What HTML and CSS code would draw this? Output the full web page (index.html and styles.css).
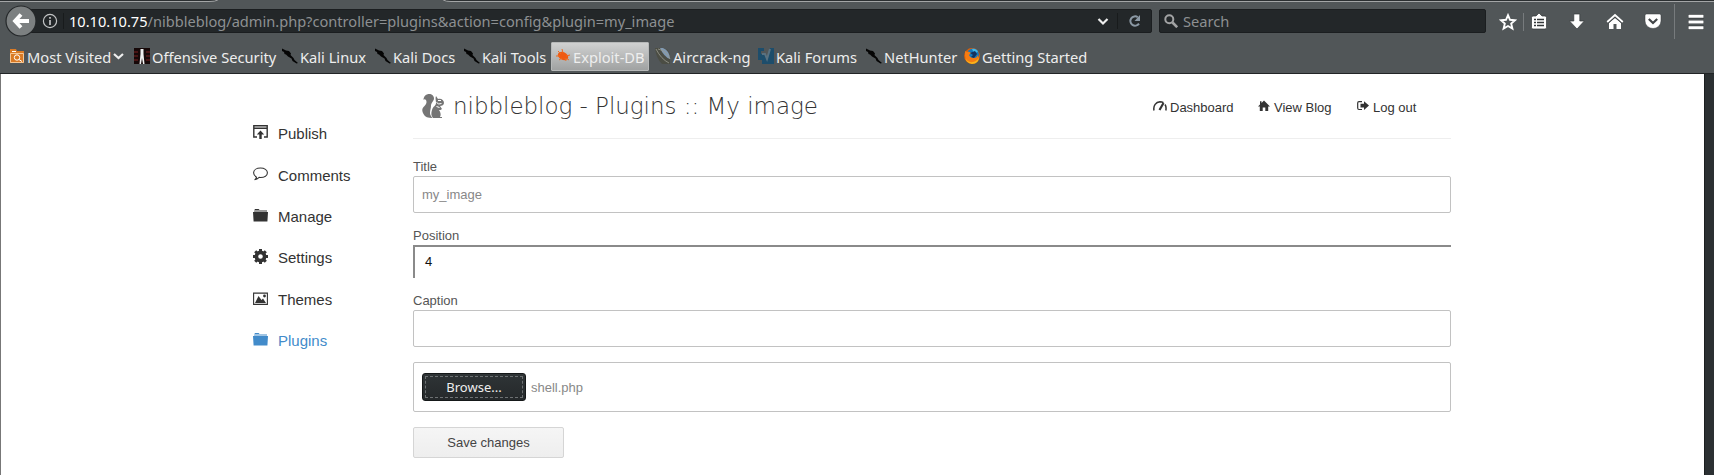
FILE: index.html
```html
<!DOCTYPE html>
<html lang="en">
<head>
<meta charset="utf-8">
<title>nibbleblog - Plugins :: My image</title>
<link rel="stylesheet" href="styles.css">
</head>
<body>
<svg class="defs" width="0" height="0">
  <symbol id="dragon" viewBox="0 0 16 16"><path d="M0 .5l4 2 3 .5 2 2.500-.5 1.500 3 3 1 2 3.500 3-1.500.5-4-2.500-1-2.500-3.500-2-2-2-1.500-.5-.5-2L0 3z" fill="#050505"/></symbol>
  <symbol id="folder" viewBox="0 0 15 13"><path d="M1.500 0h4l1 1H14v2H1z" opacity=".5"/><path d="M2 0h3.500l1 1H2z"/><path d="M0 3h15l-.6 9.500H.6z"/></symbol>
</svg>
<header class="chrome">
  <svg class="tabs" width="1714" height="3"><path d="M0 .5H218M443 .5H1714" stroke="#2b2f31"/><path d="M0 1.500H209q6 0 9-1.500M443 0q3 1.500 8 1.500H1714" stroke="#a3a5a6" fill="none"/></svg>
  <div class="toolbar">
    <div class="url">
      <svg class="back" width="32" height="32" viewBox="0 0 32 32"><circle cx="16" cy="16" r="15" fill="#7c8081" stroke="#25282a" stroke-width="1.200"/><path d="M16 9.500L10 16l6 6.500M10.500 16H24" stroke="#fff" stroke-width="3.800" fill="none"/></svg>
      <svg class="info" width="16" height="16" viewBox="0 0 16 16" fill="none" stroke="#c3c5c6" stroke-width="1.200"><circle cx="8" cy="8" r="6.600"/><path d="M8 7v5M8 4v1.700" stroke-width="1.700"/></svg>
      <span class="sep"></span>
      <span class="address"><b>10.10.10.75</b>/nibbleblog/admin.php?controller=plugins&amp;action=config&amp;plugin=my_image</span>
      <svg width="12" height="9" viewBox="0 0 12 9" fill="none" stroke="#eee" stroke-width="2.200"><path d="M1.500 2L6 6.500 10.500 2"/></svg>
      <span class="sep drop"></span>
      <svg width="14" height="14" viewBox="0 0 14 14"><path d="M11 9.600A4.700 4.700 0 1 1 9.800 3.200" fill="none" stroke="#8b98a4" stroke-width="2"/><path d="M12 1v6H6.500z" fill="#8b98a4"/></svg>
    </div>
    <div class="search">
      <svg width="14" height="14" viewBox="0 0 14 14" fill="none" stroke="#a2a3a4"><circle cx="5.300" cy="5.300" r="4" stroke-width="2"/><path d="M8.500 8.500l4.700 4.700" stroke-width="2.600"/></svg>
      <span>Search</span>
    </div>
    <div class="actions">
      <svg width="18" height="18" viewBox="0 0 18 18"><path d="M9 2.200l2 4.600 5 .5-3.800 3.300 1.200 5L9 13l-4.400 2.600 1.200-5L2 7.300l5-.5z" fill="none" stroke="#fff" stroke-width="1.900"/></svg>
      <i class="bar"></i>
      <svg width="18" height="18" viewBox="0 0 18 18"><path d="M1.500 4.500q0-1.500 1.500-1.500h3l3-3 3 3h3q1.500 0 1.500 1.500v10q0 1.500-1.500 1.500H3q-1.500 0-1.500-1.500z" fill="#fff" stroke="#34383a" stroke-width=".7"/><path d="M4 6.500h2M7 6.500h7M4 9.500h2M7 9.500h7M4 12.500h2M7 12.500h7" stroke="#34383a" stroke-width="1.500"/></svg>
      <svg width="18" height="18" viewBox="0 0 18 18"><path d="M5.800 1h6v7h4.500L9 16 1.500 8h4.300z" fill="#fff" stroke="#34383a" stroke-width=".7"/></svg>
      <svg width="18" height="18" viewBox="0 0 18 18"><path d="M9 5l6 5v6h-4.500v-5h-3v5H3v-6z" fill="#fff"/><path d="M1.200 9L9 2l7.800 7" fill="none" stroke="#fff" stroke-width="1.800"/><path d="M2.500 10L9 4.300l6.500 5.700" fill="none" stroke="#414547" stroke-width=".8"/></svg>
      <svg width="18" height="18" viewBox="0 0 18 18"><path d="M2.500 1h13q1.500 0 1.500 1.500V8A8 7.500 0 0 1 1 8V2.500Q1 1 2.500 1z" fill="#fff" stroke="#34383a" stroke-width=".5"/><path d="M4.800 6L9 10l4.200-4" stroke="#414547" stroke-width="2.200" fill="none"/></svg>
      <i class="bar tall"></i>
      <svg width="18" height="18" viewBox="0 0 18 18"><path d="M1 3.300h16M1 9h16M1 14.700h16" stroke="#34383a" stroke-width="4.200"/><path d="M1.500 3.300h15M1.500 9h15M1.500 14.700h15" stroke="#fff" stroke-width="3"/></svg>
    </div>
  </div>
  <nav class="bookmarks">
    <a><svg width="16" height="16" viewBox="0 0 16 16"><path d="M1 1h6l1 2h7v12H1z" fill="#d97a25"/><path d="M1.500 5.500h13v9h-13z" fill="none" stroke="#f6c795"/><circle cx="8" cy="9.500" r="2.700" fill="none" stroke="#fff"/><path d="M10 11.500l3 2M3 3.500h4" stroke="#fff"/></svg>Most Visited<svg class="chev" width="11" height="9" viewBox="0 0 11 9"><path d="M1 2l4.500 4L10 2" fill="none" stroke="#eee" stroke-width="2.200"/></svg></a>
    <a><svg width="16" height="16" viewBox="0 0 16 16"><path d="M0 0h16v16H0z" fill="#160808"/><path d="M0 4h4M0 8h4M0 12h4M12 4h4M12 8h4M12 12h4" stroke="#5a1818" stroke-width="1.500"/><path d="M6.500 1h3v5l1 10H9L8 10l-1 6H5.500l1-10z" fill="#eee"/></svg>Offensive Security</a>
    <a><svg width="16" height="16"><use href="#dragon"/></svg>Kali Linux</a>
    <a><svg width="16" height="16"><use href="#dragon"/></svg>Kali Docs</a>
    <a><svg width="16" height="16"><use href="#dragon"/></svg>Kali Tools</a>
    <a class="hover"><svg width="16" height="16" viewBox="0 0 16 16"><ellipse cx="8" cy="8" rx="5.500" ry="3.800" transform="rotate(25 8 8)" fill="#ef5a13"/><path d="M3 3l3 3M7 1l1 4M1 8h4M4 12l3-2M11 13l-1-3M14 12l-3-2M15 7l-4 1" stroke="#ef6a1c"/></svg>Exploit-DB</a>
    <a><svg width="16" height="16" viewBox="0 0 16 16"><path d="M0 0h8q7 2 7 8v8H7Q1 10 0 0z" fill="#4b4d44"/><path d="M5 0h3q7 3 7 11Q9 9 5 0z" fill="#8199b1"/><path d="M3 1q9 2 12 10M1 1q5 10 13 14" stroke="#9a9c90" stroke-width=".8" fill="none"/></svg>Aircrack-ng</a>
    <a><svg width="16" height="16" viewBox="0 0 16 16"><path d="M0 0h6v3H3v3h3l3 5 3-11h4v16H4v-4H0z" fill="#1d4d6b"/><path d="M4 6h3l2 5 3-10" fill="none" stroke="#5a7180" stroke-width="2"/></svg>Kali Forums</a>
    <a><svg width="16" height="16"><use href="#dragon"/></svg>NetHunter</a>
    <a><svg width="16" height="16" viewBox="0 0 16 16"><circle cx="8" cy="8" r="7.900" fill="#e66000"/><circle cx="9" cy="6.500" r="5.900" fill="#1679bd"/><path d="M8 1q4-1 6 3l-4 1z" fill="#43b8e8"/><path d="M1 3l2 1q2-1 4 1L5 7q1 3 5 3 3 0 4-3 1 7-6 8-8-1-7-12z" fill="#f57c13"/><path d="M1 9q2 6 8 5 5-1 6-6 0 8-7 8-6-1-7-7z" fill="#f8b51c"/><path d="M6 5l3 2-2 2 3 1 3-4-2-3z" fill="#15325f"/></svg>Getting Started</a>
  </nav>
</header>
<div class="view">
  <aside>
    <a><svg width="15" height="14" viewBox="0 0 15 14"><path d="M4 12H.8V.8h13.400V12H11M1 3.300h13" fill="none" stroke="currentColor" stroke-width="1.400"/><path d="M7.500 5.500L3.800 9.500h2.500V14h2.400V9.500h2.500z"/></svg>Publish</a>
    <a><svg width="15" height="14" viewBox="0 0 15 14"><path d="M3.500 10.200Q.6 8.500.6 5.800C.6 3 3.500 1 7.500 1s6.900 2 6.900 4.800-3 4.700-6.900 4.700l-1.300-.1Q4 12.500 1.600 12.800q1.700-1 1.900-2.600z" fill="none" stroke="currentColor" stroke-width="1.100"/></svg>Comments</a>
    <a><svg class="low" width="15" height="14"><use href="#folder" width="15" height="13"/></svg>Manage</a>
    <a><svg width="15" height="15" viewBox="0 0 15 15"><circle cx="7.500" cy="7.500" r="4.100" fill="none" stroke="currentColor" stroke-width="3.600"/><path d="M7.500 0v3M7.500 12v3M0 7.500h3M12 7.500h3M2.200 2.200l2 2M10.800 10.800l2 2M12.800 2.200l-2 2M2.200 12.800l2-2" stroke="currentColor" stroke-width="3"/></svg>Settings</a>
    <a><svg class="low" width="15" height="14" viewBox="0 0 15 14"><path d="M.6 1.100h13.800v11.300H.6z" fill="none" stroke="currentColor" stroke-width="1.100"/><path d="M2 11l3.500-7 3 4 1.500-1.500L13 11z"/><circle cx="11.500" cy="4" r="1.400"/></svg>Themes</a>
    <a class="current"><svg class="low" width="15" height="14"><use href="#folder" width="15" height="13"/></svg>Plugins</a>
  </aside>
  <main>
    <div class="head">
      <svg class="logo" width="23" height="25" viewBox="0 0 23 25" fill="#757575"><path d="M1.500 6C1.500 2 4.500 0 7 0c3 0 5 2 5 4.500S9 8.500 9 12c0 2-1 4-1 7 0 2 1 3 2.500 5C6 24 3 23 1.500 20-.5 17 0 14 2.500 12 4.500 10 5 8 4 6 3 5 2 5 1.500 6z"/><path d="M14 2l2 3c3-1 6 1 6 4 0 2-2 3-4 3l2 3c-1 1-2 1-3 1 2 3 2 5 1 7h2v1h-9c-2-2-2-5-1-8 1-4 4-4 4-7 0-2-1-5 0-7z"/><path d="M14.500 8.500q2 2.500 5 1M14.500 12.500l3 1M16 6.500h3" stroke="#fff" fill="none"/></svg>
      <h1>nibbleblog - Plugins :: My image</h1>
      <nav>
        <a><svg width="14" height="12" viewBox="0 0 14 12" fill="none" stroke="currentColor"><path d="M1 10.500C0 5.500 3 2 7 1.800c1.500 0 2.500.3 3.500.8M12 4.500q1.600 2.500.8 6" stroke-width="1.500"/><path d="M6.500 10L10.500 3" stroke-width="2.200"/></svg>Dashboard</a>
        <a><svg width="12" height="12" viewBox="0 0 12 12"><path d="M6 .5l6 6h-1.800V11H7.300V7.500H4.700V11H1.800V6.500H0l2-2V1.200h1.500V3z"/></svg>View Blog</a>
        <a><svg width="12" height="12" viewBox="0 0 12 12"><path d="M5 1.700H2Q.7 1.700.7 3v5Q.7 9.500 2 9.500h3" fill="none" stroke="currentColor" stroke-width="1.200"/><path d="M3.500 3.800H7V1.200l5 4.400-5 4.400V7.500H3.500z"/></svg>Log out</a>
      </nav>
    </div>
    <label>Title</label>
    <div class="field">my_image</div>
    <label class="l2">Position</label>
    <div class="select">4</div>
    <label class="l3">Caption</label>
    <div class="field"></div>
    <div class="file"><span class="browse"><span>Browse...</span></span>shell.php</div>
    <button>Save changes</button>
  </main>
  <div class="scroll"></div>
</div>
</body>
</html>
```
FILE: styles.css
```css
* { box-sizing: border-box; }
body { margin: 0; height: 475px; overflow: hidden; background: #fff; font-family: "Liberation Sans", Arial, sans-serif; }
svg { flex: none; }
svg:not([fill]) { fill: currentColor; }
.defs { display: block; position: absolute; }
.chrome { height: 74px; background: #515658; border-bottom: 1px solid #212426; font-family: "Noto Sans", sans-serif; font-size: 14.67px; color: #eee; }
.tabs { display: block; height: 3px; }
.toolbar { height: 37px; display: flex; align-items: center; padding-left: 21px; }
.url, .search { height: 24px; margin-top: -1px; background: #232729; border: 1px solid #1b1e20; border-radius: 2px; display: flex; align-items: center; white-space: nowrap; color: #8d9092; }
.url { width: 1131px; padding-right: 9px; }
.back { margin-left: -17px; }
.info { margin-left: 5px; }
.sep { width: 1px; height: 16px; background: #181b1c; margin: 0 5px; }
.drop { margin: 0 10px 0 8px; }
.address { flex: 1; font-size: 14.6px; }
.address b { font-weight: 400; color: #fff; }
.search { width: 327px; margin-left: 7px; padding-left: 4px; gap: 5px; }
.actions { flex: 1; height: 37px; display: flex; align-items: center; padding-left: 13px; }
.actions svg + svg { margin-left: 20px; }
.bar { width: 1px; height: 18px; background: #777b7d; margin: 0 6px; }
.bar.tall { height: 35px; margin: 0 12px; }
.bookmarks { height: 33px; padding: 2px 0 2px 5px; display: grid; grid-template-columns: 125px 148px 93px 89px 91px 100px 103px 108px 98px 150px; }
.bookmarks a { display: flex; align-items: center; padding-left: 4px; gap: 2px; white-space: nowrap; }
.bookmarks a > svg:first-child { margin-top: -1px; }
.bookmarks .hover { width: 98px; background: linear-gradient(#d0d1d1, #a0a2a2); border: 1px solid #b7b9b9; border-radius: 1px; padding-left: 3px; }
.view { height: 401px; display: flex; border-left: 1px solid #777; }
aside { width: 412px; padding: 39px 0 0 252px; }
aside a { height: 41.4px; display: flex; align-items: center; gap: 10px; font-size: 15px; color: #333; }
aside a svg { margin-top: -3px; }
aside a .low { margin-top: -1px; }
aside .current { color: #428bca; }
main { width: 1038px; display: flex; flex-direction: column; font-size: 13px; color: #555; }
.head { height: 65px; border-bottom: 1px solid #eee; display: flex; padding-left: 10px; }
.logo { margin: 20px 0 0 -1px; }
h1 { width: 700px; margin: 15px 0 0 8px; font: 200 23px/35px "DejaVu Sans", sans-serif; letter-spacing: -.03px; color: #333; white-space: nowrap; }
.head nav { display: grid; grid-template-columns: 105px 99px 90px; height: 24px; margin-top: 21px; }
.head nav a { display: flex; align-items: center; gap: 4px; color: #333; white-space: nowrap; }
.head nav a:first-child { gap: 3px; }
.head nav a svg { margin-top: -3px; }
label { height: 18px; line-height: 18px; margin-top: 19px; }
.field { height: 37px; border: 1px solid #c2c2c2; border-radius: 2px; padding: 0 8px; line-height: 36px; color: #888; }
.l2 { margin-top: 14px; }
.select { height: 33px; border-top: 2px solid #8a8a8a; border-left: 2px solid #8a8a8a; padding-left: 10px; line-height: 30px; color: #111; }
.l3 { margin-top: 14px; }
.file { height: 50px; margin-top: 15px; border: 1px solid #c2c2c2; border-radius: 2px; display: flex; align-items: center; padding-left: 8px; gap: 5px; color: #888; }
.browse { width: 104px; height: 28px; padding: 2px; border: 1px solid #151819; border-radius: 3px; background: linear-gradient(#2f3436, #25292b); color: #eee; font: 13px/20px "Noto Sans", sans-serif; text-align: center; }
.browse span { display: block; height: 22px; border: 1px dashed #6d7173; }
button { width: 151px; height: 31px; margin-top: 15px; padding: 0; border: 1px solid #d5d5d5; border-radius: 2px; background: linear-gradient(#f5f5f5, #eee); font: 13px "Liberation Sans", Arial, sans-serif; color: #444; }
.scroll { margin-left: auto; width: 10px; background: #2b3032; border-left: 1px solid #1c1f20; }
```
